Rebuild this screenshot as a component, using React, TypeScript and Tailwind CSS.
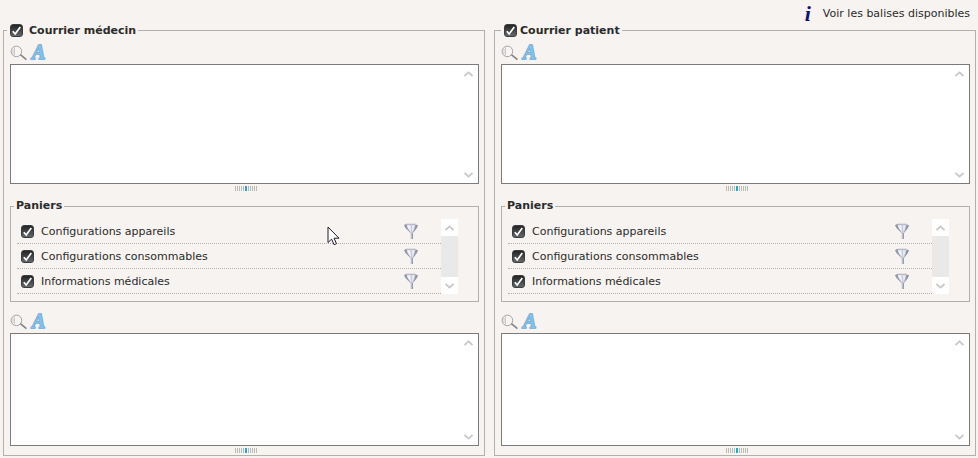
import { useState } from 'react'

const baskets = [
  { id: 'appareils', label: 'Configurations appareils' },
  { id: 'consommables', label: 'Configurations consommables' },
  { id: 'medicales', label: 'Informations médicales' },
]

function CheckBox({ id }: { id: string }) {
  const [checked, setChecked] = useState(true)

  return (
    <span className="grid h-[13px] w-[13px] shrink-0">
      <input
        id={id}
        type="checkbox"
        checked={checked}
        onChange={(e) => setChecked(e.target.checked)}
        className="col-start-1 row-start-1 h-[13px] w-[13px] appearance-none rounded-[3px] border border-[#3b3c3d] bg-linear-to-b from-[#232425] to-[#66696a]"
      />
      {checked && (
        <svg viewBox="0 0 13 13" className="pointer-events-none col-start-1 row-start-1 h-[13px] w-[13px]">
          <path d="M2.8 7.2 5.2 10 10.3 3" fill="none" stroke="#fff" strokeWidth="1.7" />
        </svg>
      )}
    </span>
  )
}

function Chevron({ down = false }: { down?: boolean }) {
  return (
    <svg viewBox="0 0 9 6" className="h-[6px] w-[9px]">
      <path
        d={down ? 'M.5 1 4.5 4.6 8.5 1' : 'M.5 5 4.5 1.4 8.5 5'}
        fill="none"
        stroke="#c8c8c8"
        strokeWidth="1.8"
      />
    </svg>
  )
}

function ScrollBar({ track }: { track: string }) {
  return (
    <div className={`flex w-[17px] shrink-0 flex-col ${track}`}>
      <button type="button" aria-label="Monter" className="flex h-[17px] items-center justify-center bg-white">
        <Chevron />
      </button>
      <div className="flex-1" />
      <button type="button" aria-label="Descendre" className="flex h-[17px] items-center justify-center bg-white">
        <Chevron down />
      </button>
    </div>
  )
}

function Funnel() {
  return (
    <svg viewBox="0 0 14 17" className="h-[17px] w-[14px]">
      <path d="M0 2.2 2.5.8h9L14 2.2 12.8 5 8.800 10.200V16H6.600v-5.800L1.500 5z" fill="#c9cbd8" />
      <path d="M0 2.200 2.500.8 3.500 5l3.600 5.500L1.500 5z" fill="#9699a8" />
      <path d="M3 2.200h3.400l.6 7L4 5z" fill="#f2f3fa" />
      <path d="M8 2.200h2.500L9.800 6 8.200 9z" fill="#e8eaf5" />
      <path d="M14 2.200 12.800 5l-4 5.200L10.500 6l1-4z" fill="#8f92a3" />
      <path d="M2.500 1.300h9" stroke="#b2b3bc" strokeWidth=".8" />
      <path d="M8.300 10v6" stroke="#8b8ea0" strokeWidth="1" />
    </svg>
  )
}

function Toolbar() {
  return (
    <div className="flex h-[17px] gap-[3px]">
      <button type="button" aria-label="Aperçu">
        <svg viewBox="0 0 17 17" className="h-[17px] w-[17px]">
          <circle cx="6.4" cy="7.4" r="5.3" fill="#f6f5f4" stroke="#a5a3a1" strokeWidth="1" />
          <path d="M4.500 3.500v8M3 5v5" stroke="#c9c9c9" strokeWidth="1" />
          <path d="m10.400 10.700 6 5" stroke="#85817e" strokeWidth="1.500" />
        </svg>
      </button>
      <button type="button" aria-label="Police">
        <svg viewBox="0 0 17 17" className="h-[17px] w-[17px] overflow-visible">
          <text
            x="2"
            y="15"
            fontSize="20"
            fill="#86c0e8"
            stroke="#6aa9d6"
            strokeWidth="1.4"
            paintOrder="stroke"
            className="font-['Liberation_Serif',serif] font-bold italic"
          >
            A
          </text>
        </svg>
      </button>
    </div>
  )
}

function Grip() {
  return (
    <div className="flex h-[9px] items-center justify-center gap-px pl-[2px]" aria-hidden="true">
      {[0, 1, 2, 3].map((n) => (
        <span key={n} className="h-[5px] w-px bg-[#bdbab6]" />
      ))}
      <span className="h-[5px] w-px bg-[#8fc3cf]" />
      <span className="h-[5px] w-[2px] bg-[#3c9fb6]" />
      <span className="h-[5px] w-px bg-[#8fc3cf]" />
      {[0, 1, 2, 3].map((n) => (
        <span key={n} className="h-[5px] w-px bg-[#bdbab6]" />
      ))}
    </div>
  )
}

function Editor({ label, height }: { label: string; height: string }) {
  return (
    <div>
      <Toolbar />
      <div className={`mt-[3px] flex border border-[#7d7b79] bg-white ${height}`}>
        <textarea aria-label={label} className="min-w-0 flex-1 resize-none overflow-hidden p-1 outline-none" />
        <ScrollBar track="mr-px bg-white" />
      </div>
      <Grip />
    </div>
  )
}

function LetterPanel({ id, title, legend }: { id: string; title: string; legend: string }) {
  return (
    <fieldset className="min-w-0 border border-[#b3afab] pt-[6px] pr-[5px] pl-[6px]">
      <legend className={`flex h-[15px] items-center pr-[2px] pl-[3px] font-bold ${legend}`}>
        <CheckBox id={id} />
        <label htmlFor={id}>{title}</label>
      </legend>
      <Editor label={`${title}, introduction`} height="h-[120px]" />
      <fieldset className="mt-[5px] min-w-0 border border-[#b3afab] pt-[5px] pr-[20px] pb-[7px] pl-[6px]">
        <legend className="-ml-[3px] h-[16px] px-[2px] leading-[16px] font-bold">Paniers</legend>
        <div className="flex">
          <ul className="flex-1">
            {baskets.map((basket) => (
              <li
                key={basket.id}
                className="flex h-[25px] items-center gap-[7px] border-b border-dotted border-[#b3afab] pr-[23px] pl-1"
              >
                <CheckBox id={`${id}-${basket.id}`} />
                <label htmlFor={`${id}-${basket.id}`} className="flex-1">
                  {basket.label}
                </label>
                <button type="button" aria-label={`Filtrer ${basket.label}`}>
                  <Funnel />
                </button>
              </li>
            ))}
          </ul>
          <ScrollBar track="bg-[#e9e9e9]" />
        </div>
      </fieldset>
      <div className="mt-[11px]">
        <Editor label={`${title}, conclusion`} height="h-[113px]" />
      </div>
    </fieldset>
  )
}

export default function App() {
  return (
    <main className="min-h-screen bg-[#f7f3f0] pr-[2px] pl-[3px] font-['DejaVu_Sans',sans-serif] text-[11px] leading-[15px] text-[#2b2b2b]">
      <div className="flex h-[23px] justify-end pt-1 pr-[6px]">
        <a href="#balises" className="flex items-center gap-3">
          <span className="font-['Liberation_Serif',serif] text-[22px] leading-[15px] font-bold text-[#10106e] italic">
            i
          </span>
          Voir les balises disponibles
        </a>
      </div>
      <div className="grid grid-cols-2 gap-[9px]">
        <LetterPanel id="medecin" title="Courrier médecin" legend="-ml-[3px] gap-[6px]" />
        <LetterPanel id="patient" title="Courrier patient" legend="gap-[3px]" />
      </div>
      <svg
        viewBox="0 0 13 20"
        className="pointer-events-none absolute top-[226px] left-[327px] h-[20px] w-[13px]"
        aria-hidden="true"
      >
        <path
          d="M1 1v15.500l3.600-3.400 2.500 5.600 2.400-1-2.500-5.500H12z"
          fill="#fff"
          stroke="#1e1e2a"
          strokeWidth="1"
        />
      </svg>
    </main>
  )
}
